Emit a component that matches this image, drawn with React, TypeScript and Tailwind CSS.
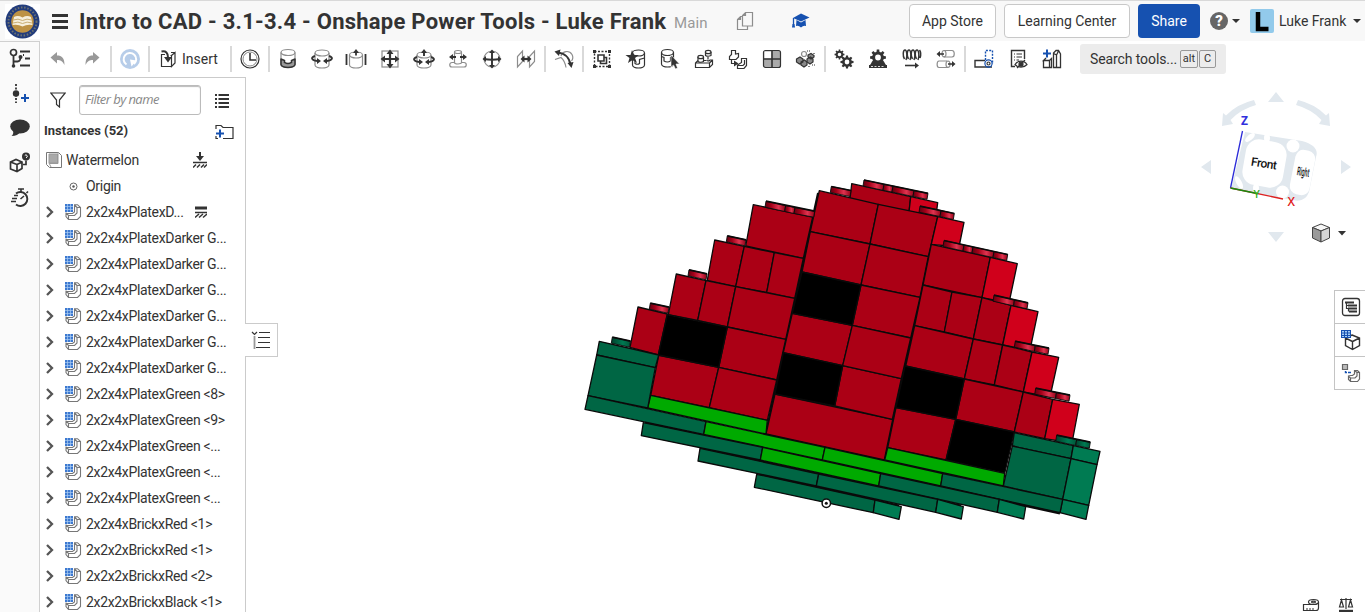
import React from "react";

type Kids = { children?: React.ReactNode };

const D = "#333333";
const G = "#8d8d8d";
const B = "#1651b0";

function Ic({ children, s = 22 }: Kids & { s?: number }) {
  return (
    <svg width={s} height={s} viewBox="0 0 22 22" fill="none" stroke={D} strokeWidth="1.2" className="shrink-0">
      {children}
    </svg>
  );
}

function Tool({ children }: Kids) {
  return (
    <div className="flex h-full w-[34px] shrink-0 items-center justify-center">
      <Ic>{children}</Ic>
    </div>
  );
}

function Sep() {
  return (
    <div className="flex w-1 shrink-0 justify-center">
      <div className="h-[26px] w-0.5 bg-[#d9d9d9]" />
    </div>
  );
}

function gearPath(cx: number, cy: number, r: number, n: number) {
  const pts: string[] = [];
  for (let i = 0; i < n; i++) {
    const a = (i * 2 * Math.PI) / n;
    const w = Math.PI / n;
    [[-0.62, 0.74], [-0.4, 1], [0.4, 1], [0.62, 0.74]].forEach(([o, k]) => {
      pts.push(`${(cx + Math.cos(a + o * w) * r * k).toFixed(2)} ${(cy + Math.sin(a + o * w) * r * k).toFixed(2)}`);
    });
  }
  const h = r * 0.36;
  return `M${pts.join("L")}Z M${cx - h} ${cy}a${h} ${h} 0 1 0 ${2 * h} 0a${h} ${h} 0 1 0 ${-2 * h} 0Z`;
}

function Gear({ x, y, r, n = 8 }: { x: number; y: number; r: number; n?: number }) {
  return <path d={gearPath(x, y, r, n)} fill={D} fillRule="evenodd" stroke="none" />;
}

function Cyl({ x = 4, y = 2, w = 14, h = 17, c = G }: { x?: number; y?: number; w?: number; h?: number; c?: string }) {
  const r = w / 2;
  const e = 3;
  return (
    <g stroke={c}>
      <path d={`M${x} ${y + e}V${y + h - e}A${r} ${e} 0 0 0 ${x + w} ${y + h - e}V${y + e}`} />
      <ellipse cx={x + r} cy={y + e} rx={r} ry={e} />
    </g>
  );
}

function Toolbar() {
  return (
    <div className="flex h-9 shrink-0 items-center bg-white pl-px">
      <Tool>
        <path d="M3.500 9.500L10 4V7.500C15 7.500 17.500 10 17.500 17C15.500 13 13.500 12 10 12V15.500Z" fill="#999" stroke="none" />
      </Tool>
      <Tool>
        <path d="M18.500 9.500L12 4V7.500C7 7.500 4.500 10 4.500 17C6.500 13 8.500 12 12 12V15.500Z" fill="#999" stroke="none" />
      </Tool>
      <Sep />
      <Tool>
        <circle cx="11" cy="11" r="10" fill="#b7cde9" stroke="none" />
        <path d="M7.500 16.500A6.300 6.300 0 1 1 15 16" stroke="#fff" strokeWidth="2" />
        <path d="M11 11.500L17.500 12.500L12.500 18.500Z" fill="#fff" stroke="none" />
      </Tool>
      <Sep />
      <div className="flex h-full w-[78px] items-center pl-1.5">
        <Ic>
          <path d="M8 6.500H4.500V18.500H14.500V16M13.500 7.500H14.500V18.500L18 15V4.500L14.500 7.500M14 4.500H18" />
          <path d="M4.500 3.500C9 2.500 11 5 11 9.500" strokeWidth="2" />
          <path d="M7 9H15L11 14.500Z" fill={D} stroke="none" />
        </Ic>
        <span className="ml-[3px] text-[14px]">Insert</span>
      </div>
      <Sep />
      <Tool>
        <circle cx="11" cy="11" r="9" />
        <circle cx="11" cy="11" r="7" stroke="#888" strokeWidth="1" />
        <path d="M11 5V12H17" strokeWidth="1.600" />
      </Tool>
      <Sep />
      <Tool>
        <path d="M4 11L7.500 12V15.500H14.500V12L18 11V17A7 3 0 0 1 4 17Z" fill="#999" stroke="none" />
        <Cyl y={1.500} h={18} />
        <path d="M4 10.500V16.500A7 3 0 0 0 18 16.500V10.500M4 11L7.500 12.500V14.500Q11 16.500 14.500 14.500V12.500L18 11" strokeWidth="1.500" />
      </Tool>
      <Tool>
        <Cyl y={2} h={18} />
        <path d="M4 8C-1 9.500 1 12.500 6 13M18 8C23 9.500 21 12.500 16 13" strokeWidth="1.900" />
        <path d="M6 10L10 13L6 16ZM16 10L12 13L16 16Z" fill={D} stroke="none" />
      </Tool>
      <Tool>
        <Cyl x={4.500} w={13} y={4} h={16} />
        <path d="M1.500 6V17M20.500 6V17" strokeWidth="1.800" />
        <path d="M11 7.500V4" strokeWidth="1.800" />
        <path d="M8 5L11 1L14 5Z" fill={D} stroke="none" />
      </Tool>
      <Tool>
        <rect x="3" y="3" width="16" height="16" stroke={G} />
        <path d="M11 4V18M4 11H18" strokeWidth="2.200" />
        <path d="M7.500 6L11 1.500L14.500 6ZM7.500 16L11 20.500L14.500 16ZM6 7.500L1.500 11L6 14.500ZM16 7.500L20.500 11L16 14.500Z" fill={D} stroke="none" />
      </Tool>
      <Tool>
        <Cyl y={4} h={16} />
        <path d="M4 9C-1 10.500 1 13.500 6 14M18 9C23 10.500 21 13.500 16 14M11 8V4" strokeWidth="1.900" />
        <path d="M8 5L11 1L14 5ZM6 11L10 14L6 17ZM16 11L12 14L16 17Z" fill={D} stroke="none" />
      </Tool>
      <Tool>
        <path d="M7.500 4.500V14.500A3.500 1.500 0 0 0 14.500 14.500V4.500M7.500 14.500H5A1.800 1.800 0 0 0 5 19H17A1.800 1.800 0 0 0 17 14.500H14.500" stroke={G} />
        <ellipse cx="11" cy="4" rx="3.500" ry="1.500" stroke={G} />
        <path d="M3.500 9H9M13 9H18.500" strokeWidth="1.900" />
        <path d="M6 6L2 9L6 12ZM16 6L20 9L16 12Z" fill={D} stroke="none" />
      </Tool>
      <Tool>
        <circle cx="11" cy="11" r="8" stroke={G} />
        <path d="M11 3V19M3 11Q11 12.500 19 11" strokeWidth="1.900" />
        <path d="M8 5L11 1.500L14 5ZM8 17L11 20.500L14 17ZM5 8L1.500 11L5 14ZM17 8L20.500 11L17 14Z" fill={D} stroke="none" />
      </Tool>
      <Tool>
        <path d="M2.500 19V8.500L7.500 3V13.500ZM14.500 19V8.500L19.500 3V13.500Z" stroke={G} />
        <path d="M7 11H15" strokeWidth="2.200" />
        <path d="M9.500 7.500L5.500 11L9.500 14.500ZM12.500 7.500L16.500 11L12.500 14.500Z" fill={D} stroke="none" />
      </Tool>
      <Sep />
      <Tool>
        <path d="M8 8A6 6 0 0 1 19 6.500A6 6 0 0 1 18.500 13M2 11.500L8 9.500Q12 13 13 19.500" stroke={G} />
        <path d="M4.500 4.500C11 5 16.500 9 17.500 17" strokeWidth="2" />
        <path d="M7.500 1.500L1.500 3.500L6 8ZM14.500 15L18.500 20L20.500 14Z" fill={D} stroke="none" />
      </Tool>
      <Sep />
      <Tool>
        <rect x="3.500" y="3.500" width="15" height="15" strokeDasharray="2 1.500" strokeWidth="1.400" />
        <path d="M2 2h3v3H2zM17 2h3v3h-3zM2 17h3v3H2zM17 17h3v3h-3z" fill={D} stroke="none" />
        <path d="M7 7H13V13H7ZM13 9.500H15.500V15.500H9.500V13" strokeWidth="1.600" />
      </Tool>
      <Tool>
        <Cyl x={7.500} w={12} c={D} y={2} h={18} />
        <path d="M10 12V15.500Q12.500 17 14.500 15.500V11.500L19.500 10" />
        <path d="M7 2L9 7L14 7L10 10L12 15L7.500 12L3 15L4.500 10L0.500 7L5.500 7Z" fill={D} stroke="none" />
      </Tool>
      <Tool>
        <Cyl x={2.500} w={12} c={D} y={1.500} h={17.500} />
        <path d="M2.500 8.500L5 9.500V13Q8.500 15 11.500 13V9.500L14.500 8.500" />
        <path d="M12 7V19L14.500 17L16.500 21L18.500 20L17 16H20.500Z" fill={D} stroke="#fff" strokeWidth="0.600" />
      </Tool>
      <Tool>
        <path d="M5 12.500L2.500 15V19.500H16.500L19.500 16.500V12H17M10.500 12.500H13M2.500 15H16.500V19.500M16.500 15L19.500 12" />
        <path d="M5 9V13.500Q7.500 15 10.500 13.500V9M12.500 4V7.500Q15 9 18 7.500V4M15 9V11.500M13.500 12Q15 14 17 12" />
        <ellipse cx="7.700" cy="9" rx="2.800" ry="1.700" fill="#fff" />
        <ellipse cx="15.200" cy="4" rx="2.800" ry="1.700" fill="#fff" />
      </Tool>
      <Tool>
        <path d="M4.500 2.500H8.500V6L11.500 5.500V9L9 11.500H2.500V8.500L4.500 6.500ZM14.500 10.500H19.500V17.500L17 20.500H10.500V17L14.500 14.500ZM17.500 12V16L16 17.500H10.500M4.500 11.500V15.500H8" />
        <path d="M7 12.500L11.500 15.500L7 18.500Z" fill={D} stroke="none" />
      </Tool>
      <Tool>
        <rect x="2.500" y="2.500" width="17" height="17" rx="2" fill="#aaa" />
        <rect x="3.500" y="3.500" width="7" height="7" fill="#fff" stroke="none" />
        <path d="M11 3V19M3 11H19" strokeWidth="1.600" />
      </Tool>
      <Tool>
        <g fill="#888">
          <path d="M1.500 11L5 9L8 11V14L4.500 16L1.500 14ZM6 14L9.500 12L12 14V17L9 19L6 17Z" />
          <path d="M12 11L15.500 9L18 11V14L15 16L12 14ZM13 7L16 5.500L19 7.500V9L16 11L13 9Z" />
        </g>
        <circle cx="9" cy="6" r="2.500" fill="#fff" stroke={G} />
        <path d="M12 3H15M19 5V7M17 17H20M14 18V19.500" strokeDasharray="1 1" />
      </Tool>
      <Sep />
      <Tool>
        <Gear x={6.500} y={6.500} r={5} />
        <Gear x={14} y={14} r={6.6} />
      </Tool>
      <Tool>
        <path d="M5 14H17L19 17H20V20H2V17H3Z" fill={D} stroke="none" />
        <Gear x={11} y={9.500} r={8} />
        <path d="M4 18.500H18" stroke="#fff" strokeWidth="0.800" strokeDasharray="2 1.500" />
      </Tool>
      <Tool>
        <path d="M3.500 11C1.500 8 2 2 4 2S6.500 9 5 12M7.500 11C5.500 8 6 2 8 2S10.500 9 9 12M11.500 11C9.500 8 10 2 12 2S14.500 9 13 12M15.500 11C13.500 8 14 2 16 2S18.500 9 17 12M18.500 2C20 4 20 7 19 10" strokeWidth="1.500" />
        <path d="M4 17.500H15" strokeWidth="1.600" />
        <path d="M14 14.500L18 17.500L14 20.500Z" fill={D} stroke="none" />
      </Tool>
      <Tool>
        <path d="M9 2.500H17C20 2.500 20 9 17 9H9M12 13H4C1.500 13 1.500 19.500 4 19.500H13" stroke={G} />
        <ellipse cx="9" cy="5.700" rx="2" ry="3.200" stroke={G} />
        <ellipse cx="13" cy="16.200" rx="2" ry="3.200" stroke={G} />
        <path d="M3 6H9M13 16H18" strokeWidth="1.600" />
        <path d="M5 3L1.500 6L5 9ZM17 13L20.500 16L17 19Z" fill={D} stroke="none" />
      </Tool>
      <Sep />
      <Tool>
        <path d="M12 12.500H2V19H19" strokeWidth="1.400" />
        <path d="M12.500 12V2.500H19.500V16" stroke={B} strokeDasharray="2 1.300" strokeWidth="1.400" />
        <circle cx="15.500" cy="15.500" r="3.600" stroke={B} />
        <circle cx="15.500" cy="15.500" r="1.500" />
      </Tool>
      <Tool>
        <path d="M17.500 11V2.500H4.500V18.500H8" strokeWidth="1.400" />
        <path d="M7 6H8M9.500 6H15M7 9H8M9.500 9H15M7 12H8M9.500 12H12" />
        <path d="M8 16.500C11 12 17 12 20 16.500C17 20 11 20 8 16.500ZM10 20L18 12" />
        <circle cx="14" cy="16.200" r="2" fill={D} />
      </Tool>
      <Tool>
        <path d="M6 1.500V9.500M2 5.500H10" stroke={B} strokeWidth="2" />
        <path d="M2.500 12V19.500H8.500V12.500H2.500L5 10M8.500 12.500L10.500 10.500V19.500H8.500M12.500 19.500V5L15 2.500H17.500L19.500 6V19.500ZM12.500 5.500L15.500 7V19M15.500 7L17.500 3" strokeWidth="1.300" />
      </Tool>
      <div className="ml-[11px] flex h-[30px] w-[146px] items-center rounded-[3px] bg-[#ececec] pl-[10px] text-[14px]">
        <span className="w-[87px] shrink-0 tracking-[-0.1px] whitespace-nowrap">Search tools...</span>
        <span className="ml-[3px] flex h-[18px] w-[18px] shrink-0 items-center justify-center rounded-[2px] border border-[#999] text-[11px]">alt</span>
        <span className="ml-px flex h-[18px] w-[17px] shrink-0 items-center justify-center rounded-[2px] border border-[#999] text-[11px]">C</span>
      </div>
    </div>
  );
}

function Header() {
  return (
    <header className="flex h-[41px] shrink-0 items-center border-t border-[#d9d9d9] bg-[#f8f8f8]">
      <svg width="35" height="35" viewBox="0 0 35 35" className="ml-[5px] shrink-0">
        <rect width="35" height="35" fill="#fff" />
        <circle cx="17.500" cy="17.500" r="17" fill="#223c7c" />
        <circle cx="17.500" cy="17.500" r="14" fill="none" stroke="#6d7270" strokeWidth="2" strokeDasharray="1.500 1.700" />
        <circle cx="17.500" cy="17.500" r="11.300" fill="#bd9245" />
        <path d="M9 13Q13 11 17.500 13.500Q22 11 26 13L27.500 21Q22 20 17.500 22.500Q13 20 7.500 21Z" fill="#f6efdc" />
        <path d="M8.500 16Q13 14 17.500 16.500Q22 14 26.500 16M8 19Q13 17 17.500 19.500Q22 17 27 19" fill="none" stroke="#c9ae75" />
      </svg>
      <div className="ml-3 flex w-4 flex-col gap-[3px]">
        <div className="h-[3px] bg-[#333]" />
        <div className="h-[3px] bg-[#333]" />
        <div className="h-[3px] bg-[#333]" />
      </div>
      <h1 className="ml-[11px] w-[586px] shrink-0 text-[22px] font-bold whitespace-nowrap tracking-[0.25px]">
        Intro to CAD - 3.1-3.4 - Onshape Power Tools - Luke Frank
      </h1>
      <span className="ml-[9px] w-[54px] pt-1 text-[15px] tracking-[0.1px] text-[#999]">Main</span>
      <svg width="18" height="20" viewBox="0 0 18 20" className="ml-2 shrink-0" fill="none" stroke="#8d8d8d" strokeWidth="1.200">
        <path d="M6 5.500H4.500L1.500 8.500V18.500H11.500V15M1.500 8.500H4.500V5.500M6.500 15V4.500L9.500 1.500H16.500V15ZM9.500 1.500V4.500H6.500" />
      </svg>
      <svg width="18" height="16" viewBox="0 0 18 16" className="ml-[38px] shrink-0">
        <path d="M9 0.500L17.500 4.500L9 8.500L1 5Z" fill={B} />
        <path d="M4.500 7L9 9.500L13.500 7L14 13Q11.500 12 9 14.500Q6.500 12 4 13Z" fill={B} />
        <path d="M1.500 5V12" stroke={B} strokeWidth="1.300" />
        <path d="M0.500 11H2.500L3 14.500H0Z" fill={B} />
      </svg>
      <button className="ml-[99px] h-[34px] w-[87px] shrink-0 rounded-[4px] border border-[#c8c8c8] bg-white text-[14px]">App Store</button>
      <button className="ml-2 h-[34px] w-[126px] shrink-0 rounded-[4px] border border-[#c8c8c8] bg-white text-[14px]">Learning Center</button>
      <button className="ml-2 h-[34px] w-[62px] shrink-0 rounded-[4px] bg-[#1651b0] text-[14px] text-white">Share</button>
      <div className="ml-[10px] flex h-[18px] w-[18px] shrink-0 items-center justify-center rounded-full bg-[#666] text-[15px] font-black text-white">?</div>
      <div className="ml-1 h-0 w-0 border-x-4 border-t-4 border-x-transparent border-t-[#333]" />
      <div className="ml-[10px] flex h-6 w-6 shrink-0 items-center justify-center rounded-[2px] bg-[#92caeb]">
        <svg width="24" height="24" viewBox="0 0 24 24">
          <path d="M8 3V20H18.500" fill="none" stroke="#000" strokeWidth="4.500" />
        </svg>
      </div>
      <span className="ml-[5px] w-[70px] shrink-0 text-[14px] whitespace-nowrap">Luke Frank</span>
      <div className="ml-1 h-0 w-0 border-x-4 border-t-4 border-x-transparent border-t-[#333]" />
    </header>
  );
}

function RailSlot({ children }: Kids) {
  return (
    <div className="flex h-[34.7px] items-center justify-center">
      <Ic>{children}</Ic>
    </div>
  );
}

function Rail() {
  return (
    <nav className="w-10 shrink-0 border-t border-r border-[#d0d0d0] bg-[#fafafa]">
      <RailSlot>
        <circle cx="4.500" cy="4.500" r="3" strokeWidth="1.700" />
        <path d="M4.500 8V17M4.500 13.500H8.500Q11.500 13.500 11.500 9" strokeWidth="1.800" />
        <circle cx="4.500" cy="18" r="1.800" fill={D} stroke="none" />
        <circle cx="11.500" cy="9" r="2" fill={D} stroke="none" />
        <path d="M11 3.500H21M16 10.500H21M11 17.500H21M14 7H15" strokeWidth="2" />
      </RailSlot>
      <RailSlot>
        <path d="M7 1V20" strokeWidth="1.800" strokeDasharray="2 1.500" />
        <circle cx="7" cy="10.500" r="3.200" fill={D} stroke="none" />
        <path d="M12 15H20M16 11V19" stroke={B} strokeWidth="2" />
      </RailSlot>
      <RailSlot>
        <ellipse cx="11" cy="8.500" rx="9.800" ry="7" fill={D} stroke="none" />
        <path d="M4 12Q5 16 2.500 18Q9 18 11 14Z" fill={D} stroke="none" />
      </RailSlot>
      <RailSlot>
        <path d="M1.500 10L7 7.500L13 10V16.500L8 19.500L1.500 17ZM1.500 10L8 12.500V19.500M8 12.500L13 10" strokeWidth="1.700" />
        <circle cx="17" cy="4.500" r="4" fill={D} stroke="none" />
        <path d="M15.800 3.500Q17 2 18 3.500T17 6" stroke="#fff" strokeWidth="1" />
        <path d="M17 8.500V12.500H14" strokeWidth="1.700" />
      </RailSlot>
      <RailSlot>
        <path d="M7 6.500A7 7 0 1 1 7 17.500" strokeWidth="1.900" />
        <path d="M12 5V2.500M9 2H15M17.500 6L19 4.500M11.500 12L15 9M5 8.500H9M3 11.500H8M2 14.500H7" strokeWidth="1.600" />
      </RailSlot>
    </nav>
  );
}

function PartIcon() {
  return (
    <svg width="17" height="17" viewBox="0 0 17 17" fill="none" className="shrink-0">
      <path
        d="M9 0.700H12.500L15.500 3.500V12.500L12.500 15.500H3.500L1 12.500V8.500M1 9L3.500 11.500H9.500L12 9V3.500H15.500M9.500 1V8L7.500 9.500H2M9.500 1L12 3.500M3.500 11.500V15.500"
        stroke="#777"
        strokeWidth="1.100"
      />
      <path d="M0 0H8V8H0Z" fill="#3d79d0" />
      <path d="M0 2.500H8M0 5.500H8M2.500 0V8M5.500 0V8" stroke="#a9cbf2" strokeWidth="0.700" />
    </svg>
  );
}

const rows = [
  "2x2x4xPlatexD...",
  ...Array(6).fill("2x2x4xPlatexDarker G..."),
  "2x2x4xPlatexGreen <8>",
  "2x2x4xPlatexGreen <9>",
  ...Array(3).fill("2x2x4xPlatexGreen <..."),
  "2x2x4xBrickxRed <1>",
  "2x2x2xBrickxRed <1>",
  "2x2x2xBrickxRed <2>",
  "2x2x2xBrickxBlack <1>",
];

function Panel() {
  return (
    <aside className="flex w-[206px] shrink-0 flex-col overflow-hidden border-t border-r border-[#cbcbcb] bg-white">
      <div className="flex h-11 shrink-0 items-center">
        <svg width="16" height="16" viewBox="0 0 16 16" fill="none" stroke={D} strokeWidth="1.200" className="ml-[10px]">
          <path d="M0.800 1H15.200L9.500 8V15L6.500 12.500V8Z" />
        </svg>
        <div className="ml-[13px] flex h-[30px] w-[122px] items-center rounded-[3px] border border-[#bbb] pl-[5px] font-['Open_Sans',sans-serif] text-[13px] tracking-[-0.55px] text-[#888] italic shadow-[inset_0_1px_1px_#bbb]">
          Filter by name
        </div>
        <svg width="14" height="15" viewBox="0 0 14 15" className="ml-[14px]" stroke={D} strokeWidth="2">
          <path d="M0 2H2M3.500 2H14M0 6H2M3.500 6H14M0 10H2M3.500 10H14M0 14H2M3.500 14H14" />
        </svg>
      </div>
      <div className="flex h-[18px] shrink-0 items-center pl-1">
        <span className="w-[172px] text-[13px] font-bold">Instances (52)</span>
        <svg width="19" height="16" viewBox="0 0 19 16" fill="none" stroke={D} strokeWidth="1.200" className="mt-0.5 -ml-px">
          <path d="M1 5V1.500H6L8 3.500H18V14.500H8M1 12V14.500H3" />
          <path d="M5 5.500V13.500M1 9.500H9" stroke={B} strokeWidth="2" />
        </svg>
      </div>
      <div className="mt-[7px] flex h-[26px] shrink-0 items-center pl-[6px]">
        <svg width="16" height="16" viewBox="0 0 16 16" fill="none" stroke="#777">
          <path d="M0.500 0.500H12.500L15.500 3.500V15.500H3.500L0.500 12.500Z" />
          <path d="M3 2H11.500V11H3Z" fill="#aaa" stroke="#999" />
          <path d="M12 0.500V11.500H3.500M3 11L5 15" stroke="#999" />
        </svg>
        <span className="ml-1 w-[127px] text-[14px] tracking-[-0.25px]">Watermelon</span>
        <svg width="14" height="17" viewBox="0 0 14 17" fill="none" stroke={D}>
          <path d="M7 0V5" strokeWidth="2" />
          <path d="M3 4H11L7 9Z" fill={D} stroke="none" />
          <path d="M0 10.500H14M0 15.500L3 12.500M4 15.500L7 12.500M8 15.500L11 12.500M11 15.500L14 12.500" strokeWidth="1.500" />
        </svg>
      </div>
      <div className="flex h-[26px] shrink-0 items-center pl-[29px]">
        <svg width="9" height="9" viewBox="0 0 9 9" fill="none" stroke="#666" className="mr-2">
          <circle cx="4.500" cy="4.500" r="3.500" />
          <circle cx="4.500" cy="4.500" r="1.200" fill="#555" stroke="none" />
        </svg>
        <span className="text-[14px] tracking-[-0.3px]">Origin</span>
      </div>
      {rows.map((r, i) => (
        <div key={i} className="flex h-[26px] shrink-0 items-center pl-[6px]">
          <svg width="8" height="12" viewBox="0 0 8 12" fill="none" stroke="#555" strokeWidth="2.300" className="mr-[11px] shrink-0">
            <path d="M1 1L6 6L1 11" />
          </svg>
          <PartIcon />
          <span className="ml-1 text-[14px] whitespace-nowrap tracking-[-0.33px]">{r}</span>
          {i === 0 && (
            <svg width="12" height="13" viewBox="0 0 12 13" stroke={D} className="ml-[11px]">
              <path d="M0 2H12" strokeWidth="3" />
              <path d="M0 6.500H12M0 11.500L4 8M4 11.500L8 8M8 11.500L12 8" strokeWidth="1.500" />
            </svg>
          )}
        </div>
      ))}
    </aside>
  );
}

const R = "#ab0015";
const RB = "#d0001b";
const K = "#000000";
const DG = "#006644";
const DB = "#007b52";
const LG = "#00aa00";

const faces: [string, string][] = [
  [R, "851.7,183.7 910.7,196.7 909,212 850,199"],
  [RB, "910.7,196.7 937.7,202.7 936,216 909,212"],
  [R, "753.3,204.7 812.7,217 803.3,258.3 745.7,246"],
  [R, "714.7,240 744.3,246.3 735.7,286.7 707.3,280.3"],
  [R, "744.3,246.3 774.3,252.7 766.7,292.3 735.7,286.7"],
  [R, "774.3,252.7 803.3,258.3 794.7,298.3 766.7,292.3"],
  [R, "676.3,274 706,280.7 697.7,320.3 668.3,314.7"],
  [R, "706,280.7 735.7,286.7 727.3,327 697.7,320.3"],
  [R, "735.7,286.7 794.7,298.3 785.7,339.3 727.3,327"],
  [R, "638,307 667.3,314 658.3,355 630,347.3"],
  [R, "727.3,327 785.7,339.3 776.7,380 718.7,367.3"],
  [R, "658.7,355.3 718.7,367.3 709.3,407.7 650.7,395.3"],
  [R, "718.7,367.3 776.7,380 767.3,420.3 709.3,407.7"],
  [R, "819.3,190.7 878.3,204.3 870,244 810.3,231.7"],
  [R, "810.3,231.7 870,244 861,285 802,272"],
  [R, "792.3,313.3 852.3,325.3 842.7,365.7 783.3,352.7"],
  [R, "775,394 892.7,419.3 884.3,460 766,434"],
  [R, "842.7,365.7 901.3,378.7 892.3,419.3 834.7,406"],
  [R, "878.3,204.3 937.7,216.7 928.3,256.7 870,244"],
  [R, "870,244 928.3,256.7 920,297.3 861,285"],
  [R, "861,285 920,297.3 910.7,338 852.3,325.3"],
  [R, "852.3,325.3 910.7,338 901.3,378.7 842.7,365.7"],
  [RB, "937.7,216.7 964,222.3 959,247 931.3,244.3"],
  [R, "931.3,244.3 990.3,257.3 982,297.7 923,285"],
  [RB, "990.3,257.3 1017.3,263.7 1009,303 982,297.7"],
  [R, "923,285 952,292 944.3,332 914.7,325.7"],
  [R, "952,292 982,297.7 973.3,339 944.3,332"],
  [R, "982,297.7 1011,305.3 1002.7,345 973.3,339"],
  [RB, "1011,305.3 1038,311.7 1030,350 1002.7,345"],
  [R, "914.7,325.7 973.3,339 964.3,379 905.7,366"],
  [R, "973.3,339 1002.7,345 994.3,385 964.3,379"],
  [R, "1002.7,345 1032,352 1023.3,392 994.3,385"],
  [RB, "1032,352 1058.7,357.3 1050,397 1023.3,392"],
  [R, "964.3,379 1023.3,392 1014.3,432 955.7,419.3"],
  [R, "1023.3,392 1052.7,399.3 1044.7,438.7 1014.3,432"],
  [RB, "1052.7,399.3 1079.3,404.3 1072,443 1044.7,438.7"],
  [R, "896,407.7 955.7,419.3 946,460 887.7,447.7"],
  [K, "667.3,314.7 727.3,327 718.7,367.3 658.3,355"],
  [K, "802,272 861,285 852.3,325.3 792.3,313.3"],
  [K, "783.3,352.7 842.7,365.7 834.7,406 775,394"],
  [K, "905,366 964.3,379 955.7,419.3 896,407.7"],
  [K, "955.7,419.3 1014.3,432 1004.7,473.3 946,460"],
  [LG, "650.7,395.3 767.3,420.3 766,434 647.7,408"],
  [LG, "887.7,447.7 1004.7,473.3 1003.3,486 884.7,460"],
  [DG, "1014.3,432.7 1073.3,445.7 1071,458.7 1012.3,446"],
  [DG, "1012.3,446 1071,458.7 1062.7,499.3 1003.3,486"],
  [DB, "1073.3,445.7 1100,451.3 1097,464.7 1071,458.7"],
  [DB, "1071,458.7 1097,464.7 1088.7,505.3 1062.7,499.3"],
  [DB, "1062.7,499.3 1088.7,505.3 1086,519.3 1060,512.7"],
  [DG, "599.3,341.3 658.7,355 655.3,367.7 596.7,355"],
  [DG, "596.7,355 655.3,367.7 647.7,408 588,395.7"],
  [DG, "588,395.7 706,421.7 703.7,434.3 585,409.3"],
  [LG, "706,421.7 825,447.3 822.3,459.8 703.7,434.3"],
  [LG, "825,447.3 942.7,473.5 940.7,486 822.3,459.8"],
  [DG, "942.7,473.5 1062.7,499.3 1060,512.7 940.7,486"],
  [DG, "643.3,422.7 762.7,447.3 760.3,460 641.3,435.7"],
  [LG, "762.7,447.3 880.7,473.5 878.7,486 760.3,460"],
  [DG, "880.7,473.5 999.3,499.3 997.3,512.3 878.7,486"],
  [DB, "999.3,499.3 1025.7,506.7 1023.7,519 997.3,512.3"],
  [DG, "700,448.3 818.7,474 816.3,486 698,461"],
  [DG, "818.7,474 937.7,499.3 935.7,512.3 816.3,486"],
  [DB, "937.7,499.3 963.3,506.7 961.3,519 935.7,512.3"],
  [DG, "756.7,474.3 875,500 873.3,512.7 754.3,487.3"],
  [DB, "875,500 901.3,506.7 899,519.3 873.3,512.7"],
];

const studs: { p: [number, number][]; g?: boolean }[] = [
  { p: [[864, 180], [884, 184.3], [893, 186], [914, 190.5], [928, 193.3]] },
  { p: [[920, 206.2], [941, 210.5], [954.3, 213.5]] },
  { p: [[944, 240.5], [964, 245], [973, 247], [994, 251.5], [1007.7, 254.5]] },
  { p: [[994, 295.2], [1014.5, 299.8], [1028, 302.8]] },
  { p: [[1015.3, 341.2], [1035.3, 345.5], [1049, 348.2]] },
  { p: [[1035.7, 388.2], [1056.5, 392.5], [1070, 395.2]] },
  { p: [[1056.7, 435.2], [1076.7, 439.5], [1090.3, 442.2]], g: true },
  { p: [[766, 201.2], [785.7, 205.5], [795, 207.5], [814.7, 211.2]] },
  { p: [[727.3, 235.8], [746, 239.8]] },
  { p: [[689, 269.8], [707, 273.8]] },
  { p: [[650.3, 303.2], [669, 307.2]] },
  { p: [[612.3, 337.2], [630.5, 341.2]], g: true },
  { p: [[831.3, 186.5], [851, 190.5]] },
];

function Canvas() {
  return (
    <svg width="1119" height="535" viewBox="246 77 1119 535" className="block shrink-0" fontFamily="Open Sans, sans-serif">
      <defs>
        <linearGradient id="sr">
          <stop offset="0" stopColor="#5e0010" />
          <stop offset="0.3" stopColor="#a50019" />
          <stop offset="0.65" stopColor="#e03450" />
          <stop offset="1" stopColor="#8f0015" />
        </linearGradient>
        <linearGradient id="sg">
          <stop offset="0" stopColor="#00402c" />
          <stop offset="0.6" stopColor="#007a52" />
          <stop offset="1" stopColor="#005538" />
        </linearGradient>
      </defs>
      <path
        d="M818.500 193L766.500 432M937 218L884.500 458M645 422.800L1060 513M702 448.500L961 506M759 474.500L899 506"
        stroke="#0a0a0a"
        strokeWidth="3"
        fill="none"
      />
      <g stroke="#0a0a0a" strokeWidth="1.300" strokeLinejoin="round">
        {faces.map(([c, p], i) => (
          <polygon key={i} points={p} fill={c} />
        ))}
        {studs.map((s, i) => (
          <g key={i}>
            {s.p.slice(1).map(([x, y], j) => {
              const [a, b] = s.p[j];
              return (
                <polygon key={j} points={`${a},${b} ${x},${y} ${x - 1},${y + 6} ${a - 1},${b + 6}`} fill={s.g ? "url(#sg)" : "url(#sr)"} strokeWidth="0.900" />
              );
            })}
            <path d={`M${s.p[0].join(" ")}L${s.p[s.p.length - 1].join(" ")}`} strokeWidth="1.700" />
          </g>
        ))}
      </g>
      <circle cx="826.300" cy="503.300" r="4.200" fill="#fff" stroke="#111" strokeWidth="1.500" />
      <circle cx="826.300" cy="503.300" r="1.500" fill="#111" />

      <g fill="#e1e8ee">
        <path d="M1276 92L1284 102H1268ZM1276 242L1268 232H1284ZM1201 167L1211 160V174ZM1351 167L1341 160V174Z" />
        <path d="M1222 126L1223 113L1226 115.500Q1237 104 1254 100L1256 105Q1241 109 1230.500 120L1233 124Z" />
        <path d="M1330 126L1329 113L1326 115.500Q1315 104 1298 100L1296 105Q1311 109 1321.500 120L1319 124Z" />
        <path d="M1245 132L1302 141Q1320 146 1316 157L1309 192Q1305 203 1293 200L1231 189Z" />
      </g>
      <g fill="#fff">
        <rect x="-20.500" y="-23" width="41" height="46" rx="13" transform="translate(1264.500 163.500) rotate(10)" />
        <rect x="-10" y="-22.500" width="20" height="45" rx="8" transform="translate(1302.500 172.500) rotate(11)" />
        <circle cx="1293" cy="146" r="6.500" />
        <circle cx="1282.500" cy="192" r="6.500" />
        <ellipse cx="1250" cy="137.500" rx="6" ry="2.700" transform="rotate(-40 1250 137.500)" />
        <ellipse cx="1239" cy="182.500" rx="2.700" ry="7" transform="rotate(-28 1239 182.500)" />
        <ellipse cx="1267" cy="138" rx="3" ry="5" />
        <ellipse cx="1256" cy="188" rx="3" ry="4" />
      </g>
      <path d="M1230.500 188L1242.500 131" stroke="#2a2ad8" strokeWidth="1.300" />
      <path d="M1230.500 188L1283 199" stroke="#dc2020" strokeWidth="1.300" />
      <path d="M1230.500 188L1257 193.500" stroke="#1a8a10" strokeWidth="1.300" />
      <text x="1241" y="125" fontSize="12" fontWeight="700" fill="#3030dd">Z</text>
      <text x="1287.500" y="205.500" fontSize="12" fontWeight="600" fill="#e02020">X</text>
      <text x="1253.500" y="198" fontSize="10.500" fontWeight="600" fill="#30b020">Y</text>
      <text transform="translate(1250.500 165.500) rotate(9)" fontSize="12" fontFamily="Roboto, sans-serif" fontWeight="500" fill="#111" textLength="26">Front</text>
      <text transform="translate(1296.500 175) rotate(9) scale(0.440 1)" fontSize="12" fontFamily="Roboto, sans-serif" fontWeight="500" fill="#111">Right</text>

      <g stroke="#444" strokeWidth="1" strokeLinejoin="round">
        <path d="M1312.500 227.500L1321 224L1329.500 227.500L1321 231Z" fill="#f7f7f7" />
        <path d="M1312.500 227.500L1321 231V242L1312.500 238Z" fill="#9a9a9a" />
        <path d="M1329.500 227.500L1321 231V242L1329.500 238Z" fill="#d6d6d6" />
      </g>
      <path d="M1338 231H1346L1342 235.500Z" fill={D} />

      <g fill="none" stroke={D} strokeWidth="1.200">
        <path d="M1308 604.500H1303.500V610.500H1316Q1318.500 610.500 1318.500 608V602M1303.500 604.500H1313Q1318 604.500 1318.500 602" />
        <ellipse cx="1313.500" cy="602" rx="5" ry="2.500" />
        <ellipse cx="1313.500" cy="602" rx="2" ry="0.800" />
        <path d="M1307 610V608M1310 610V608M1313 610V608" strokeWidth="1" />
        <path d="M1340 599.500H1352M1346 598V609M1341.500 600L1339.500 607H1343.500ZM1350.500 600L1348.500 607H1352.500Z" />
        <path d="M1339 611H1353" strokeWidth="2.400" />
      </g>
    </svg>
  );
}

function SideTabs() {
  return (
    <div className="absolute top-[213px] right-0 flex w-[31px] flex-col border-t border-l border-[#c4c4c4] bg-white">
      <div className="flex h-[33px] items-center justify-center border-b border-[#c4c4c4] pl-0.5">
        <Ic>
          <rect x="2.500" y="2.500" width="17" height="17" rx="2.500" strokeWidth="1.300" />
          <path d="M5 6.500H14M8 9.500H17M8 12.500H17M9 15.500H17" strokeWidth="1.900" />
          <path d="M6.500 6V9.500H9M6.500 9V12.500H9M8.500 12V15.500" />
        </Ic>
      </div>
      <div className="flex h-[33px] items-center justify-center border-b border-[#c4c4c4] pl-0.5">
        <Ic>
          <path d="M12 6L19.500 9V16.500L12.500 20.500L5.500 16.500V9ZM5.500 9L12.500 12.500V20.500M12.500 12.500L19.500 9" strokeWidth="1.400" />
          <path d="M1 1H11V9H1Z" fill={B} stroke="none" />
          <path d="M2 2H4V3.500H2ZM5 2H7V3.500H5ZM8 2H10V3.500H8ZM2 4.500H4V6H2ZM5 4.500H7V6H5ZM8 4.500H10V6H8ZM2 7H4V8H2ZM5 7H7V8H5ZM8 7H10V8H8Z" fill="#a5cdf5" stroke="none" />
        </Ic>
      </div>
      <div className="flex h-[33px] items-center justify-center border-b border-[#c4c4c4] pl-0.5">
        <Ic>
          <path d="M2.500 2.500H7.500V7.500H2.500Z" fill="#bbb" stroke="#666" />
          <path d="M5.500 9V10.500H12" stroke={B} strokeWidth="1.400" strokeDasharray="3 1" />
          <path d="M14.500 8.500H17.500L19.500 10.500V17L17.500 19.500H10.500L8.500 17.500V14L11 13.500H12.500L14.500 12ZM8.500 14.500L10.500 16H15L17 14V10.500H19.500M14.500 8.500L17 10.500M10.500 16V19.500" stroke="#666" />
        </Ic>
      </div>
    </div>
  );
}

export default function App() {
  return (
    <div className="flex h-[612px] w-[1365px] flex-col overflow-hidden bg-white font-['Roboto','Liberation_Sans',sans-serif] text-[#333]">
      <Header />
      <div className="flex min-h-0 flex-1">
        <Rail />
        <div className="flex min-w-0 flex-1 flex-col">
          <Toolbar />
          <div className="flex min-h-0 flex-1">
            <Panel />
            <main className="relative flex-1">
              <Canvas />
              <div className="absolute top-[246px] -left-px flex h-[34px] w-[33px] items-center justify-center border border-l-0 border-[#cbcbcb] bg-white">
                <svg width="20" height="18" viewBox="0 0 20 18" fill="none" stroke={D} strokeWidth="1.200">
                  <path d="M1 1L3.500 3.500L6 1M8 1.500H19M7 6.500H19M7 11.500H19M5 16.500H19" />
                  <path d="M3.500 5V18" stroke="#999" strokeWidth="1.800" />
                </svg>
              </div>
              <SideTabs />
            </main>
          </div>
        </div>
      </div>
    </div>
  );
}
